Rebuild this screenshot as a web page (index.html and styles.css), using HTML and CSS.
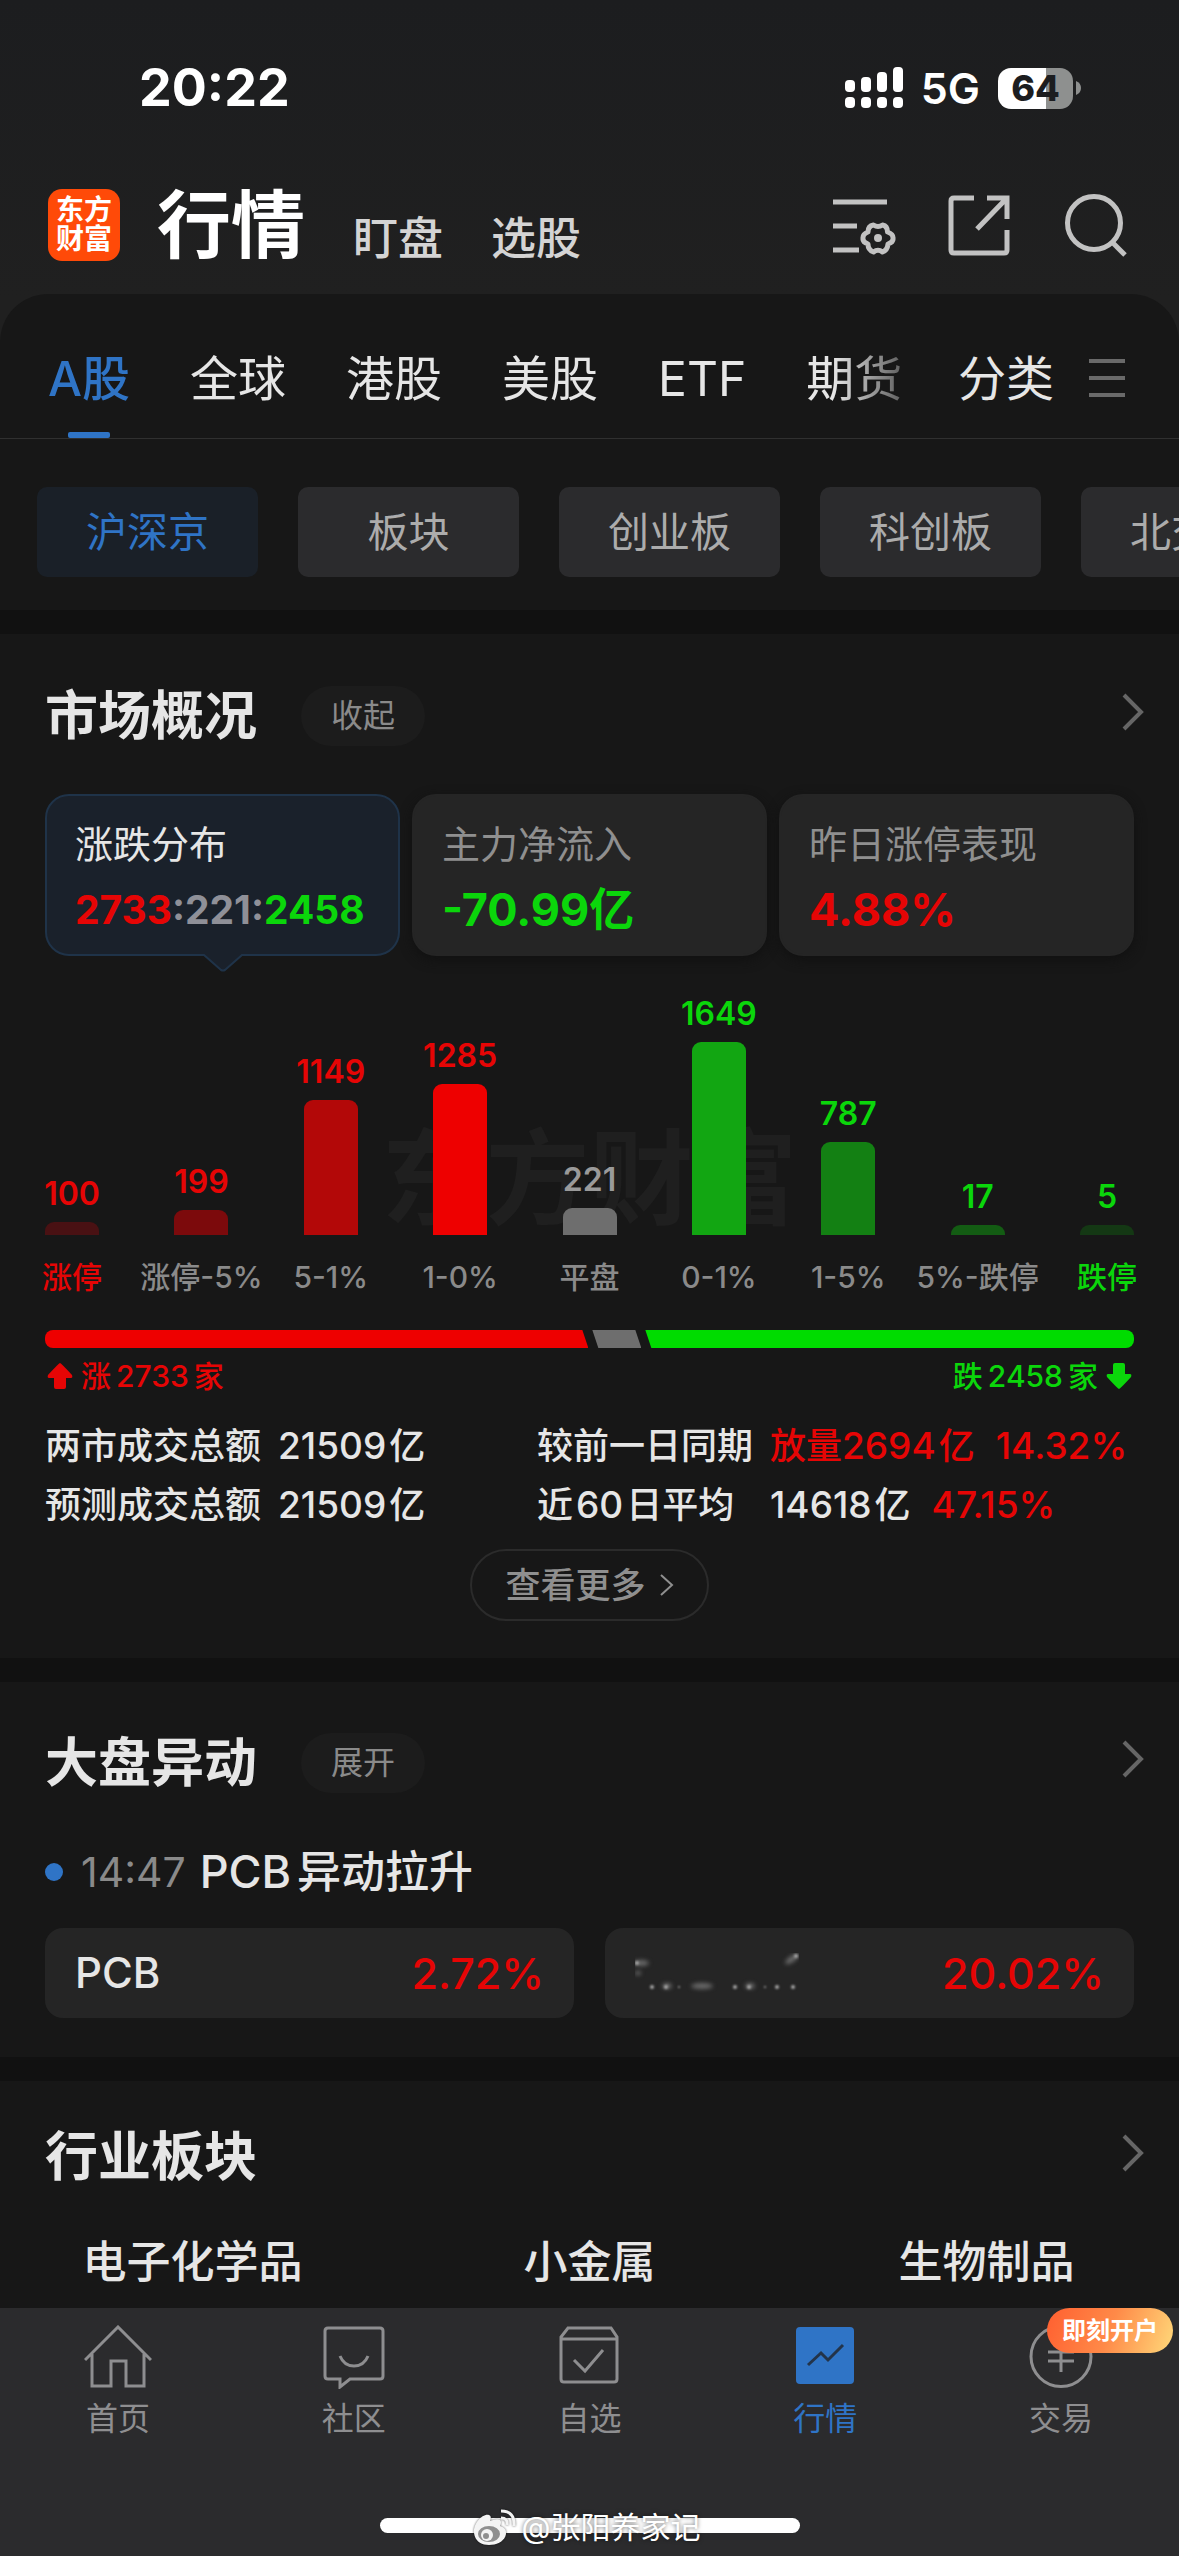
FILE: index.html
```html
<!DOCTYPE html>
<html lang="zh-CN">
<head>
<meta charset="utf-8">
<meta name="viewport" content="width=device-width, initial-scale=1">
<title>行情</title>
<link rel="stylesheet" href="styles.css">
</head>
<body>
<div class="app">
  <div class="status">
    <span class="status-time">20:22</span>
    <div class="status-right">
      <svg class="signal" viewBox="0 0 58 42" aria-hidden="true">
        <rect x="0" y="13" width="10" height="12" rx="4"/><rect x="16" y="10" width="10" height="15" rx="4"/><rect x="32" y="5" width="10" height="20" rx="4"/><rect x="48" y="0" width="10" height="25" rx="4"/>
        <rect x="0" y="30" width="10" height="11" rx="4"/><rect x="16" y="30" width="10" height="11" rx="4"/><rect x="32" y="30" width="10" height="11" rx="4"/><rect x="48" y="30" width="10" height="11" rx="4"/>
      </svg>
      <span class="network">5G</span>
      <span class="battery">64</span>
      <svg class="battery-cap" viewBox="0 0 5 14" aria-hidden="true"><path d="M0 0Q5 2 5 7T0 14Z"/></svg>
    </div>
  </div>

  <header class="header">
    <div class="logo"><span>东方</span><span>财富</span></div>
    <nav class="header-nav">
      <h1>行情</h1>
      <a href="#watch">盯盘</a>
      <a href="#pick">选股</a>
    </nav>
    <div class="header-actions">
      <button type="button" aria-label="设置">
        <svg viewBox="0 0 64 64"><path d="M1 9H55M1 33H25M1 57H27"/><path d="M41.5 32Q46 35 50.500 32Q55.500 33 55.500 39Q61.500 41 61 45.500Q61.500 49 56 51Q55.500 57 50.500 59Q46 55.500 41.500 59Q36 57 36 51Q30.500 49 31 45.500Q30.500 41 36 39Q36 33 41.500 32Z" stroke-linejoin="round"/><circle class="dot" cx="46" cy="45" r="4"/></svg>
      </button>
      <button type="button" aria-label="分享">
        <svg viewBox="0 0 64 64"><path d="M26 5H6Q3 5 3 8V57Q3 60 6 60H56Q59 60 59 57V37M39 5H59V26M58 6L29 36"/></svg>
      </button>
      <button type="button" aria-label="搜索">
        <svg viewBox="0 0 64 64"><circle cx="30" cy="30" r="26.500"/><path d="M49 50L61 62"/></svg>
      </button>
    </div>
  </header>

  <main class="sheet">
    <nav class="tabs">
      <div class="tabs-scroll">
        <a class="tab active" href="#a">A股</a>
        <a class="tab" href="#global">全球</a>
        <a class="tab" href="#hk">港股</a>
        <a class="tab" href="#us">美股</a>
        <a class="tab" href="#etf">ETF</a>
        <a class="tab" href="#futures">期货</a>
      </div>
      <div class="tabs-end">
        <a class="tab" href="#category">分类</a>
        <button class="menu" type="button" aria-label="菜单"><svg viewBox="0 0 36 38"><path d="M0 2H36M0 19H36M0 36H36"/></svg></button>
      </div>
    </nav>

    <div class="chips">
      <button class="chip active" type="button">沪深京</button>
      <button class="chip" type="button">板块</button>
      <button class="chip" type="button">创业板</button>
      <button class="chip" type="button">科创板</button>
      <button class="chip" type="button">北交所</button>
    </div>

    <section class="section overview">
      <div class="section-head">
        <h2>市场概况</h2>
        <button class="pill" type="button">收起</button>
        <a class="more-link" href="#overview" aria-label="市场概况"><svg viewBox="0 0 22 38"><path d="M2 2L19 19L2 36"/></svg></a>
      </div>
      <div class="cards">
        <button class="card active" type="button">
          <span class="card-label">涨跌分布</span>
          <span class="card-ratio"><b class="up">2733</b>:221:<b class="down">2458</b></span>
          <svg class="card-tip" viewBox="0 0 42 18" aria-hidden="true"><path d="M0 0H42L24 16Q21 18 18 16Z"/><path class="tip-line" d="M0 1H2L19 16Q21 17 23 16L40 1H42"/></svg>
        </button>
        <button class="card" type="button">
          <span class="card-label">主力净流入</span>
          <span class="card-value down">-70.99亿</span>
        </button>
        <button class="card" type="button">
          <span class="card-label">昨日涨停表现</span>
          <span class="card-value up">4.88%</span>
        </button>
      </div>

      <div class="chart">
        <span class="chart-mark">东方财富</span>
        <div class="col up"><span class="num">100</span><i class="bar up-5" style="height:13px"></i><span class="range up">涨停</span></div>
        <div class="col up"><span class="num">199</span><i class="bar up-4" style="height:25px"></i><span class="range">涨停-5%</span></div>
        <div class="col up"><span class="num">1149</span><i class="bar up-3" style="height:135px"></i><span class="range">5-1%</span></div>
        <div class="col up"><span class="num">1285</span><i class="bar up-1" style="height:151px"></i><span class="range">1-0%</span></div>
        <div class="col"><span class="num">221</span><i class="bar flat" style="height:27px"></i><span class="range">平盘</span></div>
        <div class="col down"><span class="num">1649</span><i class="bar down-1" style="height:193px"></i><span class="range">0-1%</span></div>
        <div class="col down"><span class="num">787</span><i class="bar down-3" style="height:93px"></i><span class="range">1-5%</span></div>
        <div class="col down"><span class="num">17</span><i class="bar down-4" style="height:10px"></i><span class="range">5%-跌停</span></div>
        <div class="col down"><span class="num">5</span><i class="bar down-5" style="height:10px"></i><span class="range down">跌停</span></div>
      </div>

      <div class="ratio" aria-hidden="true">
        <i class="ratio-up" style="flex-grow:2733"></i>
        <i class="ratio-flat" style="flex-grow:221"></i>
        <i class="ratio-down" style="flex-grow:2458"></i>
      </div>
      <div class="ratio-text">
        <span class="up"><svg viewBox="0 0 26 26" aria-hidden="true"><path d="M13 0Q14 0 25 12Q26 15 24 15H19V24Q19 26 17 26H9Q7 26 7 24V15H2Q0 15 1 12Q12 0 13 0Z"/></svg><span>涨<b>2733</b>家</span></span>
        <span class="down"><span>跌<b>2458</b>家</span><svg viewBox="0 0 26 26" aria-hidden="true"><path d="M13 26Q12 26 1 14Q0 11 2 11H7V2Q7 0 9 0H17Q19 0 19 2V11H24Q26 11 25 14Q14 26 13 26Z"/></svg></span>
      </div>

      <dl class="stats">
        <dt>两市成交总额</dt><dd><span><b>21509</b>亿</span></dd>
        <dt>较前一日同期</dt><dd class="up"><span>放量<b>2694</b>亿</span><b>14.32%</b></dd>
        <dt>预测成交总额</dt><dd><span><b>21509</b>亿</span></dd>
        <dt>近<b>60</b>日平均</dt><dd><span><b>14618</b>亿</span><b class="up">47.15%</b></dd>
      </dl>
      <button class="see-more" type="button">查看更多<svg viewBox="0 0 14 24" aria-hidden="true"><path d="M1 2L12 12L1 22"/></svg></button>
    </section>

    <section class="section moves">
      <div class="section-head">
        <h2>大盘异动</h2>
        <button class="pill" type="button">展开</button>
        <a class="more-link" href="#moves" aria-label="大盘异动"><svg viewBox="0 0 22 38"><path d="M2 2L19 19L2 36"/></svg></a>
      </div>
      <a class="move" href="#pcb"><time>14:47</time><span><b>PCB</b>异动拉升</span></a>
      <div class="boxes">
        <a class="box" href="#pcb"><span>PCB</span><span class="up">2.72%</span></a>
        <a class="box" href="#stock">
          <svg class="smudge" viewBox="0 0 164 40" aria-hidden="true">
            <g class="smudge-soft"><ellipse cx="6" cy="10" rx="8" ry="3"/><ellipse cx="3" cy="20" rx="3" ry="2"/><ellipse cx="157" cy="6" rx="8" ry="3" transform="rotate(-35 157 6)"/><ellipse cx="67" cy="33" rx="11" ry="3"/><ellipse cx="32" cy="33" rx="5" ry="3"/><ellipse cx="115" cy="33" rx="5" ry="3"/></g>
            <g class="smudge-dots"><circle cx="17" cy="34" r="2"/><circle cx="31" cy="34" r="2"/><circle cx="44" cy="34" r="1"/><circle cx="100" cy="34" r="2"/><circle cx="114" cy="34" r="2"/><circle cx="130" cy="34" r="1"/><circle cx="142" cy="34" r="2"/><circle cx="158" cy="34" r="2"/><circle cx="2" cy="10" r="2"/><circle cx="161" cy="3" r="2"/></g>
          </svg>
          <span class="up">20.02%</span>
        </a>
      </div>
    </section>

    <section class="section industry">
      <div class="section-head">
        <h2>行业板块</h2>
        <a class="more-link" href="#industry" aria-label="行业板块"><svg viewBox="0 0 22 38"><path d="M2 2L19 19L2 36"/></svg></a>
      </div>
      <div class="industries">
        <a href="#chem">电子化学品</a><a href="#metal">小金属</a><a href="#bio">生物制品</a>
      </div>
    </section>
  </main>

  <footer class="footer">
    <nav class="tabbar">
      <a href="#home"><svg viewBox="0 0 68 64"><path d="M1 35L34 2L67 35M8 29V61H27V36H42V61H60V29"/></svg>首页</a>
      <a href="#community"><svg viewBox="0 0 68 64"><path d="M8 3H60Q63 3 63 6V51Q63 54 60 54H30L20 62V54H8Q5 54 5 51V6Q5 3 8 3Z"/><path d="M20 31Q24 41 34 41T48 31"/></svg>社区</a>
      <a href="#mine"><svg viewBox="0 0 68 64"><path d="M13 3H56L62 12V54Q62 57 59 57H9Q6 57 6 54V12ZM6 14H62M19 35L30 46L48 25"/></svg>自选</a>
      <a class="active" href="#market"><svg viewBox="0 0 68 64"><rect x="5" y="2" width="58" height="57" rx="4"/><path class="spark" d="M17 40L30 28L37 35L52 20"/></svg>行情</a>
      <a href="#trade"><svg viewBox="0 0 68 64"><circle cx="34" cy="31.500" r="30"/><path d="M21 27H47M21 36H47M34 17V47"/></svg>交易<span class="badge">即刻开户</span></a>
    </nav>
    <div class="home-indicator">
      <div class="credit">
        <svg viewBox="0 0 44 36" aria-hidden="true"><path d="M1 24C0 14 10 4 16 6Q19 7 17 12Q27 8 28 13Q28 15 27 17Q34 19 33 25C32 32 24 36 16 36S2 32 1 24Z"/><ellipse class="eye" cx="16" cy="25" rx="11" ry="8"/><circle cx="14" cy="26" r="6"/><circle class="eye" cx="13" cy="27" r="3"/><path class="wave" d="M28 2Q42 2 41 17M28 9Q35 9 34 16"/></svg>
        <span>@张阳养家记</span>
      </div>
    </div>
  </footer>
</div>
</body>
</html>
```
FILE: styles.css
```css
:root {
  --bg: #171717;
  --gap: #111111;
  --text: #e6e6e6;
  --muted: #8a8a8a;
  --blue: #2f74c6;
  --up: #e60505;
  --down: #0bd60b;
}
* { box-sizing: border-box; }
body {
  margin: 0;
  background: var(--bg);
  color: var(--text);
  font-family: Inter, "Noto Sans CJK SC", sans-serif;
}
h1, h2, dl, dt, dd { margin: 0; }
a { color: inherit; text-decoration: none; }
b { font-weight: inherit; }
button {
  margin: 0;
  padding: 0;
  border: 0;
  background: none;
  color: inherit;
  font: inherit;
  text-align: left;
}
svg { display: block; fill: none; stroke: currentColor; }
.up { color: var(--up); }
.down { color: var(--down); }
.app {
  display: flex;
  flex-direction: column;
  min-height: 100vh;
  overflow: hidden;
  background: linear-gradient(#1c1d1f, #202020 300px);
}

/* status bar */
.status {
  display: flex;
  justify-content: space-between;
  align-items: center;
  padding: 63px 98px 63px 139px;
  line-height: 50px;
  color: #fff;
}
.status-time { font-size: 52px; font-weight: 700; }
.status-right { display: flex; align-items: center; }
.signal { width: 58px; height: 42px; fill: #fff; stroke: none; }
.network { margin: 0 18px; font-size: 43px; font-weight: 600; }
.battery {
  width: 75px;
  border-radius: 13px;
  background: linear-gradient(90deg, #fff 64%, #8e908f 64%);
  color: #1c1d1f;
  font-size: 36px;
  font-weight: 800;
  line-height: 41px;
  text-align: center;
}
.battery-cap { width: 5px; height: 14px; margin-left: 3px; fill: #8e908f; stroke: none; }

/* header */
.header {
  display: flex;
  align-items: flex-start;
  padding: 13px 51px 33px 48px;
}
.logo {
  display: flex;
  flex-direction: column;
  align-items: center;
  justify-content: center;
  width: 72px;
  height: 72px;
  border-radius: 14px;
  background: #ff4a08;
  color: #fff;
  font-size: 28px;
  font-weight: 700;
  line-height: 29px;
}
.header-nav {
  display: flex;
  flex: 1;
  align-items: flex-end;
  gap: 48px;
  height: 72px;
  margin-left: 37px;
  color: #d4d4d4;
  font-size: 45px;
  font-weight: 500;
  line-height: 44px;
}
.header-nav h1 { color: #fff; font-size: 74px; font-weight: 700; line-height: 72px; }
.header-actions { display: flex; gap: 52px; padding-top: 4px; color: #c2c2c2; }
.header-actions svg { width: 64px; height: 64px; stroke-width: 5; }
.header-actions .dot { fill: currentColor; stroke: none; }

/* market tabs */
.sheet { flex: 1; border-radius: 48px 48px 0 0; background: var(--bg); }
.tabs {
  display: flex;
  align-items: flex-start;
  justify-content: space-between;
  padding: 56px 54px 0 48px;
  border-bottom: 1px solid #303030;
  font-size: 48px;
  line-height: 58px;
}
.tabs-scroll {
  display: flex;
  gap: 60px;
  mask-image: linear-gradient(90deg, #000 92%, rgba(0, 0, 0, .35));
}
.tabs-end { display: flex; align-items: flex-start; gap: 35px; }
.tab { display: flex; flex-direction: column; align-items: center; gap: 24px; white-space: nowrap; }
.tab::after { content: ""; width: 42px; height: 6px; border-radius: 2px; }
.tab.active { color: var(--blue); font-weight: 500; }
.tab.active::after { background: var(--blue); }
.menu { padding: 9px 0; }
.menu svg { width: 36px; height: 38px; stroke: #6a6a6a; stroke-width: 4; }

.chips { display: flex; gap: 40px; padding: 48px 0 33px 37px; overflow: hidden; }
.chip {
  flex: none;
  width: 221px;
  border-radius: 10px;
  background: #2b2b2d;
  color: #acacac;
  font-size: 41px;
  line-height: 90px;
  text-align: center;
}
.chip.active { background: #1a2028; color: var(--blue); }

/* sections */
.section { padding: 0 45px; border-top: 24px solid var(--gap); }
.section-head {
  display: flex;
  align-items: flex-start;
  gap: 44px;
  margin-right: -10px;
  line-height: 60px;
}
.section-head h2 { font-size: 53px; font-weight: 700; line-height: 60px; }
.pill {
  width: 124px;
  border-radius: 30px;
  background: #1c1c1c;
  color: var(--muted);
  font-size: 32px;
  text-align: center;
}
.more-link { margin-left: auto; padding: 7px 0; }
.more-link svg { width: 22px; height: 38px; stroke: #666; stroke-width: 4; }

.overview { padding-top: 52px; padding-bottom: 37px; }
.cards { display: grid; grid-template-columns: repeat(3, 1fr); gap: 12px; margin-top: 48px; }
.card {
  position: relative;
  display: flex;
  flex-direction: column;
  gap: 20px;
  padding: 25px 28px 21px;
  border: 2px solid #252525;
  border-radius: 24px;
  background: #252525;
  box-shadow: 0 4px 12px #111;
  line-height: 46px;
  white-space: nowrap;
}
.card.active { border-color: #1f3349; background: #1a212b; box-shadow: none; }
.card-label { color: #8f8f8f; font-size: 38px; }
.card.active .card-label { color: var(--text); }
.card-ratio { color: #8f9098; font-size: 39px; font-weight: 700; }
.card-value { font-size: 45px; font-weight: 700; }
.card-tip { position: absolute; left: 50%; top: 100%; width: 42px; height: 18px; margin-left: -21px; fill: #1a212b; stroke: none; }
.card-tip .tip-line { fill: none; stroke: #1f3349; stroke-width: 2; }

/* distribution chart */
.chart {
  position: relative;
  display: flex;
  align-items: flex-end;
  justify-content: space-between;
  margin-top: 43px;
  color: #9a9a9a;
  line-height: 30px;
  white-space: nowrap;
}
.chart-mark {
  position: absolute;
  right: 0;
  bottom: 60px;
  left: 0;
  color: #1f1f1f;
  font-size: 104px;
  font-weight: 700;
  line-height: 106px;
  text-align: center;
}
.col { position: relative; display: flex; flex-direction: column; align-items: center; width: 54px; }
.col.up { color: var(--up); }
.col.down { color: var(--down); }
.num { margin-bottom: 13px; font-size: 32px; font-weight: 600; }
.bar { width: 54px; border-radius: 9px 9px 0 0; }
.up-1 { background: #ee0000; }
.up-3 { background: #b30808; }
.up-4 { background: #7c0a0c; }
.up-5 { background: #491113; }
.flat { background: #6e6e6e; }
.down-1 { background: #12a612; }
.down-3 { background: #138013; }
.down-4 { background: #135c13; }
.down-5 { background: #143814; }
.range { margin-top: 27px; color: var(--muted); font-size: 30px; font-weight: 500; }
.range.up { color: var(--up); }
.range.down { color: var(--down); }

.ratio { display: flex; margin-top: 38px; border-radius: 8px; overflow: hidden; }
.ratio i { height: 18px; }
.ratio-up { background: #ee0000; clip-path: polygon(0 0, calc(100% - 6px) 0, 100% 100%, 0 100%); }
.ratio-flat { min-width: 49px; margin: 0 4px; background: #6e6e6e; clip-path: polygon(0 0, calc(100% - 6px) 0, 100% 100%, 6px 100%); }
.ratio-down { background: #00dc00; clip-path: polygon(0 0, 100% 0, 100% 100%, 6px 100%); }
.ratio-text {
  display: flex;
  justify-content: space-between;
  margin-top: 13px;
  padding: 0 2px;
  font-size: 30px;
  font-weight: 500;
  line-height: 30px;
}
.ratio-text > span { display: flex; align-items: center; gap: 8px; }
.ratio-text b { margin: 0 5px; }
.ratio-text svg { width: 26px; height: 26px; fill: currentColor; stroke: none; }

.stats {
  display: grid;
  grid-template-columns: 233px 1fr 233px 364px;
  row-gap: 17px;
  margin-top: 34px;
  font-size: 36px;
  font-weight: 500;
  line-height: 42px;
  white-space: nowrap;
}
.stats dd { display: flex; gap: 21px; }
.stats b { font-size: 37px; }
.stats span b, .stats dt b { margin-right: 3px; }
.stats dt b { margin-left: 3px; }
.see-more {
  display: flex;
  align-items: center;
  gap: 14px;
  margin: 23px auto 0;
  padding: 0 33px;
  border: 2px solid #2b2b2b;
  border-radius: 36px;
  color: #8f8f8f;
  font-size: 35px;
  font-weight: 500;
  line-height: 68px;
}
.see-more svg { width: 14px; height: 24px; stroke-width: 2; }

/* market moves */
.moves { padding-top: 51px; padding-bottom: 39px; }
.move { display: flex; align-items: center; gap: 14px; margin-top: 54px; font-size: 44px; font-weight: 500; line-height: 50px; }
.move::before { content: ""; width: 18px; height: 18px; margin-right: 4px; border-radius: 50%; background: var(--blue); }
.move time { color: var(--muted); font-size: 41px; font-weight: 400; }
.move b { margin-right: 6px; font-size: 45px; }
.boxes { display: grid; grid-template-columns: 1fr 1fr; gap: 31px; margin-top: 31px; }
.box {
  display: flex;
  align-items: center;
  justify-content: space-between;
  padding: 0 30px;
  border-radius: 18px;
  background: #252525;
  font-size: 42px;
  font-weight: 500;
  line-height: 90px;
}
.box .up { font-size: 43px; }
.smudge { width: 164px; height: 40px; stroke: none; }
.smudge-soft { fill: #6a6a6a; filter: blur(2px); }
.smudge-dots { fill: #a8a8a8; filter: blur(1px); }

/* industries */
.industry { padding-top: 46px; padding-bottom: 22px; }
.industries {
  display: grid;
  grid-template-columns: repeat(3, 1fr);
  gap: 102px;
  margin-top: 51px;
  font-size: 44px;
  font-weight: 500;
  line-height: 48px;
  text-align: center;
  white-space: nowrap;
}

/* bottom bar */
.footer { padding-bottom: 24px; background: #2b2b2d; }
.tabbar {
  display: grid;
  grid-template-columns: repeat(5, 1fr);
  padding-top: 17px;
  color: #8e8e90;
  font-size: 32px;
  line-height: 36px;
}
.tabbar a { position: relative; display: flex; flex-direction: column; align-items: center; gap: 12px; }
.tabbar svg { width: 68px; height: 64px; stroke-width: 3; }
.tabbar .active { color: var(--blue); }
.tabbar .active rect { fill: currentColor; stroke: none; }
.tabbar .spark { stroke: #23344a; }
.badge {
  position: absolute;
  top: -17px;
  right: 6px;
  padding: 0 15px;
  border-radius: 23px;
  background: linear-gradient(110deg, #ff5f30, #ff8a48 50%, #ffd97a);
  color: #fff;
  font-size: 24px;
  font-weight: 700;
  line-height: 45px;
}
.home-indicator { position: relative; width: 420px; height: 15px; margin: 81px auto 0; border-radius: 8px; background: #fff; }
.credit {
  position: absolute;
  top: -10px;
  left: 93px;
  display: flex;
  align-items: center;
  gap: 5px;
  color: #fff;
  font-size: 30px;
  line-height: 38px;
  text-shadow: 0 0 4px rgba(0, 0, 0, .6);
  white-space: nowrap;
}
.credit svg { width: 44px; height: 36px; fill: #f4f4f4; stroke: none; filter: drop-shadow(0 0 1px rgba(0, 0, 0, .6)); }
.credit .eye { fill: #8f8f8f; }
.credit .wave { fill: none; stroke: #f4f4f4; stroke-width: 3; }
```
